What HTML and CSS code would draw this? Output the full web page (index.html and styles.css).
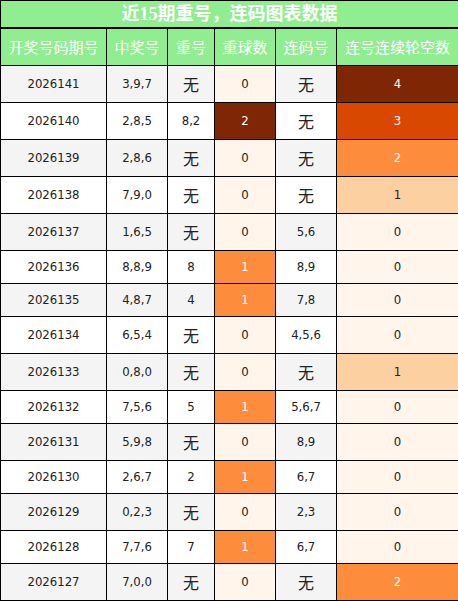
FILE: index.html
```html
<!DOCTYPE html>
<html lang="zh-CN">
<head>
    <meta charset="UTF-8">
    <meta name="viewport" content="width=device-width, initial-scale=1.0">
    <title>近15期重号，连码图表数据</title>
    <link rel="stylesheet" href="styles.css">
</head>
<body>
    <table class="chart">
        <colgroup>
            <col class="w-issue">
            <col class="w-win">
            <col class="w-rep">
            <col class="w-cnt">
            <col class="w-seq">
            <col class="w-gap">
        </colgroup>
        <thead>
            <tr><th colspan="6" class="title">近15期重号，连码图表数据</th></tr>
            <tr class="head">
                <th>开奖号码期号</th>
                <th>中奖号</th>
                <th>重号</th>
                <th>重球数</th>
                <th>连码号</th>
                <th>连号连续轮空数</th>
            </tr>
        </thead>
        <tbody>
            <tr><td>2026141</td><td>3,9,7</td><td><span class="none">无</span></td><td class="h0">0</td><td><span class="none">无</span></td><td class="g4">4</td></tr>
            <tr><td>2026140</td><td>2,8,5</td><td>8,2</td><td class="h2">2</td><td><span class="none">无</span></td><td class="g3">3</td></tr>
            <tr><td>2026139</td><td>2,8,6</td><td><span class="none">无</span></td><td class="h0">0</td><td><span class="none">无</span></td><td class="g2">2</td></tr>
            <tr><td>2026138</td><td>7,9,0</td><td><span class="none">无</span></td><td class="h0">0</td><td><span class="none">无</span></td><td class="g1">1</td></tr>
            <tr><td>2026137</td><td>1,6,5</td><td><span class="none">无</span></td><td class="h0">0</td><td>5,6</td><td class="g0">0</td></tr>
            <tr><td>2026136</td><td>8,8,9</td><td>8</td><td class="h1">1</td><td>8,9</td><td class="g0">0</td></tr>
            <tr><td>2026135</td><td>4,8,7</td><td>4</td><td class="h1">1</td><td>7,8</td><td class="g0">0</td></tr>
            <tr><td>2026134</td><td>6,5,4</td><td><span class="none">无</span></td><td class="h0">0</td><td>4,5,6</td><td class="g0">0</td></tr>
            <tr><td>2026133</td><td>0,8,0</td><td><span class="none">无</span></td><td class="h0">0</td><td><span class="none">无</span></td><td class="g1">1</td></tr>
            <tr><td>2026132</td><td>7,5,6</td><td>5</td><td class="h1">1</td><td>5,6,7</td><td class="g0">0</td></tr>
            <tr><td>2026131</td><td>5,9,8</td><td><span class="none">无</span></td><td class="h0">0</td><td>8,9</td><td class="g0">0</td></tr>
            <tr><td>2026130</td><td>2,6,7</td><td>2</td><td class="h1">1</td><td>6,7</td><td class="g0">0</td></tr>
            <tr><td>2026129</td><td>0,2,3</td><td><span class="none">无</span></td><td class="h0">0</td><td>2,3</td><td class="g0">0</td></tr>
            <tr><td>2026128</td><td>7,7,6</td><td>7</td><td class="h1">1</td><td>6,7</td><td class="g0">0</td></tr>
            <tr><td>2026127</td><td>7,0,0</td><td><span class="none">无</span></td><td class="h0">0</td><td><span class="none">无</span></td><td class="g2">2</td></tr>
        </tbody>
    </table>
</body>
</html>
```

FILE: styles.css
```css
body {
    margin: 0;
    background: #fff;
    font-family: "Liberation Serif", "Noto Sans CJK SC", serif;
}
.chart {
    width: 458px;
    border-collapse: collapse;
    table-layout: fixed;
}
.w-issue { width: 106px; }
.w-win { width: 61px; }
.w-rep { width: 47px; }
.w-cnt { width: 61px; }
.w-seq { width: 61px; }
.w-gap { width: 122px; }
.chart th,
.chart td {
    border: 1px solid #000;
    text-align: center;
    padding: 0;
}
.title {
    background: #90ee90;
    color: #fff;
    font-size: 18px;
    font-weight: bold;
    height: 26px;
    line-height: 26px;
    border-bottom: 2px solid #000 !important;
}
.head th {
    background: #90ee90;
    color: #fff;
    font-family: "Noto Sans CJK SC", sans-serif;
    font-size: 15px;
    font-weight: normal;
    height: 36px;
    line-height: 20px;
}
.chart td {
    font-family: "DejaVu Sans Condensed", "DejaVu Sans", "Noto Sans CJK SC", sans-serif;
    font-size: 13px;
    color: #222;
    height: 32px;
    line-height: 18px;
}
.chart tbody tr:nth-child(odd) { background: #f4f4f4; }
.chart tbody tr:nth-child(even) { background: #fff; }
.none {
    display: inline-block;
    font-family: "Noto Sans CJK SC", sans-serif;
    font-size: 16px;
    line-height: 22px;
    padding: 7px 0;
    vertical-align: middle;
}
.chart td.h0,
.chart td.g0 { background: #fff5eb; }
.chart td.h1 { background: #fd8d3c; color: #fff; }
.chart td.h2 { background: #7f2704; color: #fff; }
.chart td.g1 { background: #fdd0a2; }
.chart td.g2 { background: #fd8d3c; color: #fff; }
.chart td.g3 { background: #d94801; color: #fff; }
.chart td.g4 { background: #7f2704; color: #fff; }
```
